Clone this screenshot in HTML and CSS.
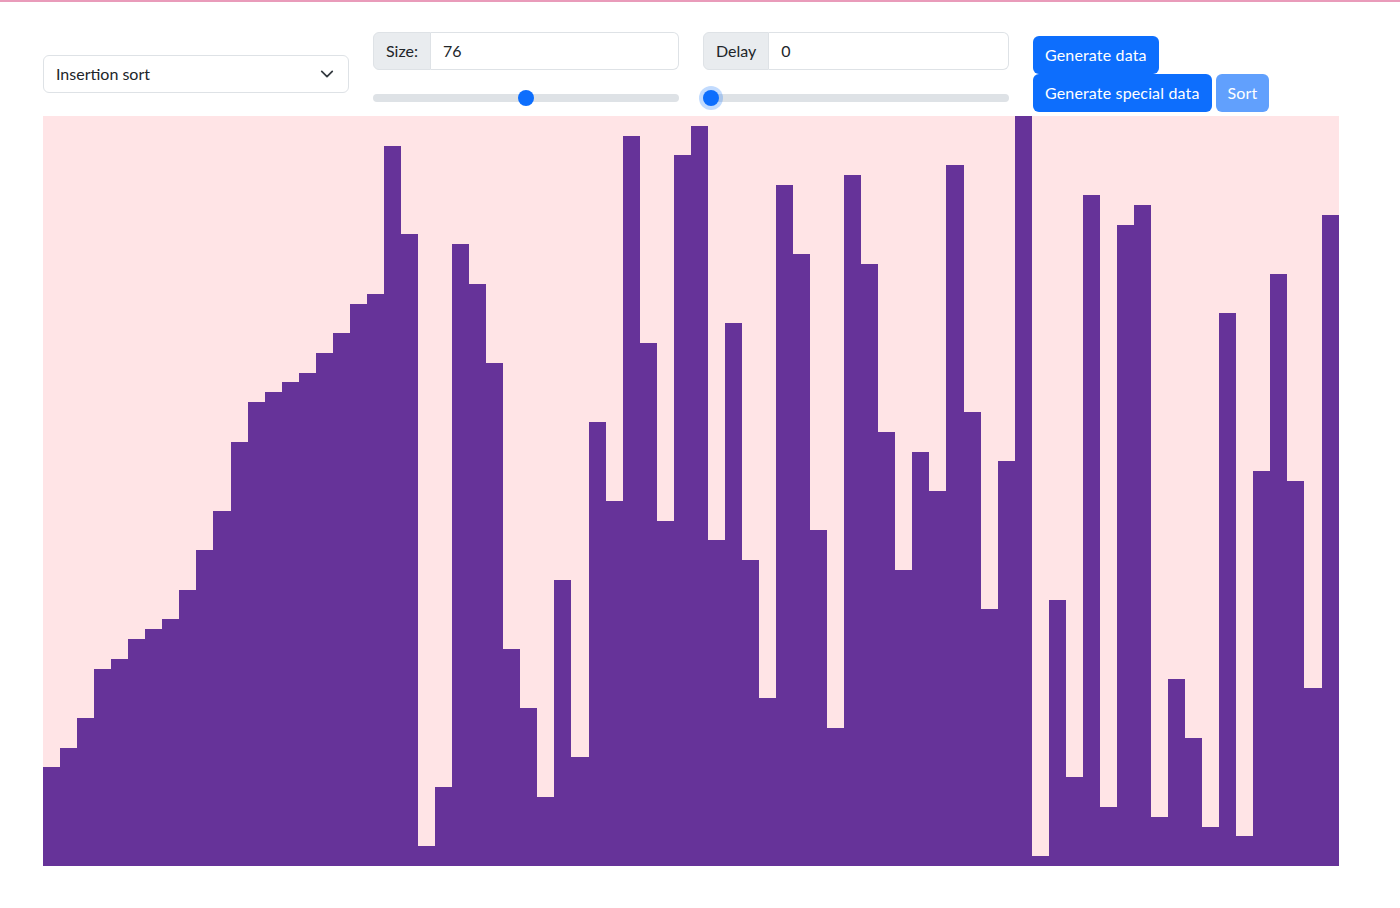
FILE: index.html
```html
<!DOCTYPE html>
<html lang="en">
<head>
<meta charset="utf-8">
<title>Sorting visualizer</title>
<link rel="stylesheet" href="styles.css">
</head>
<body>
<div class="page">
  <div class="controls">
    <div class="col col-select">
      <div class="select">
        <span class="select-text">Insertion sort</span>
        <svg class="chevron" width="16" height="16" viewBox="0 0 16 16"><path d="M2 5l6 6 6-6" fill="none" stroke="#343a40" stroke-width="2" stroke-linecap="round" stroke-linejoin="round"/></svg>
      </div>
    </div>
    <div class="col">
      <div class="input-group">
        <span class="ig-label">Size:</span>
        <span class="ig-input">76</span>
      </div>
      <div class="range"><div class="track"></div><div class="thumb" style="left: 145px"></div></div>
    </div>
    <div class="col">
      <div class="input-group">
        <span class="ig-label">Delay</span>
        <span class="ig-input">0</span>
      </div>
      <div class="range"><div class="track"></div><div class="thumb focus" style="left: 0px"></div></div>
    </div>
    <div class="col col-buttons">
      <div class="btn-row"><button class="btn">Generate data</button></div>
      <div class="btn-row">
        <button class="btn">Generate special data</button>
        <button class="btn disabled">Sort</button>
      </div>
    </div>
  </div>
  <div class="chart" id="chart"></div>
</div>
<script src="app.js"></script>
</body>
</html>
```
FILE: app.js
```js
const values = [10,12,15,20,21,23,24,25,28,32,36,43,47,48,49,50,52,54,57,58,73,64,2,8,63,59,51,22,16,7,29,11,45,37,74,53,35,72,75,33,55,31,17,69,62,34,14,70,61,44,30,42,38,71,46,26,41,76,1,27,9,68,6,65,67,5,19,13,4,56,3,40,60,39,18,66];
const chart = document.getElementById('chart');
const max = 76;
values.forEach(v => {
  const b = document.createElement('div');
  b.className = 'bar';
  b.style.height = (v / max * 100) + '%';
  chart.appendChild(b);
});
```
FILE: styles.css
```css
* { box-sizing: border-box; }
html, body { margin: 0; padding: 0; background: #fff; }
body {
  font-family: Lato, "Noto Sans", "Liberation Sans", sans-serif;
  font-size: 16px;
  color: #212529;
  border-top: 2px solid #e99bba;
}
.page { padding: 30px 61px 0 43px; }
.controls { display: flex; gap: 24px; height: 84px; }
.col { width: 306px; display: flex; flex-direction: column; }
.col-select { padding-top: 23px; }
.select {
  position: relative;
  height: 38px;
  border: 1px solid #dee2e6;
  border-radius: 6px;
  display: flex;
  align-items: center;
  padding: 0 12px;
}
.select-text { line-height: 24px; }
.chevron { position: absolute; right: 14px; top: 11px; width: 14px; height: 14px; }
.input-group { display: flex; height: 38px; }
.ig-label {
  background: #e9ecef;
  border: 1px solid #dee2e6;
  border-radius: 6px 0 0 6px;
  padding: 0 12px 1px;
  display: flex; align-items: center;
}
.ig-input {
  flex: 1;
  border: 1px solid #dee2e6;
  border-left: none;
  border-radius: 0 6px 6px 0;
  padding: 0 12px 1px;
  display: flex; align-items: center;
}
.range { position: relative; height: 24px; margin-top: 16px; }
.track { position: absolute; left: 0; right: 0; top: 8px; height: 8px; border-radius: 8px; background: #dee2e6; }
.thumb { position: absolute; top: 4px; width: 16px; height: 16px; border-radius: 50%; background: #0d6efd; }
.thumb.focus { box-shadow: 0 0 0 4px rgba(13,110,253,.25); }
.col-buttons { width: auto; padding-top: 4px; }
.btn-row { display: flex; gap: 4px; }
.btn {
  font: inherit;
  letter-spacing: 0.15px;
  height: 38px;
  padding: 0 12px;
  border: none;
  border-radius: 6px;
  background: #0d6efd;
  color: #fff;
  line-height: 24px;
}
.btn.disabled { opacity: .65; }
.chart {
  display: flex;
  align-items: flex-end;
  width: 1296px;
  height: 750px;
  background: #ffe4e6;
}
.bar { flex: 1; background: #663399; }
```
